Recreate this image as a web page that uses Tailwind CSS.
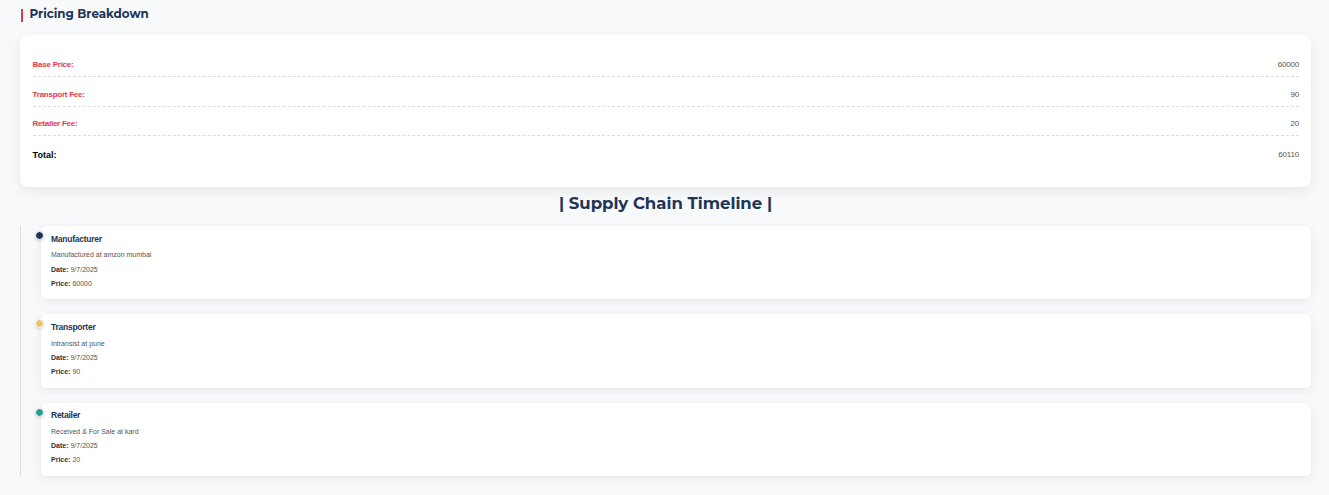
<!DOCTYPE html>
<html lang="en">
<head>
<meta charset="utf-8">
<title>Pricing and Supply Chain</title>
<script src="https://cdn.jsdelivr.net/npm/@tailwindcss/browser@4"></script>
</head>
<body class="h-[495px] overflow-hidden bg-[#f8f9fb] pl-5 pr-[18px] font-['Liberation_Sans',Arial,sans-serif] text-[#555]">
  <h2 class="flex h-[35px] items-start pt-[5px] font-['Montserrat','Inter',sans-serif] text-[11.9px] leading-[18px] font-bold whitespace-nowrap text-[#1d3557]">
    <span class="mt-1 ml-[1px] h-[13px] w-[2px] bg-[#e63946]"></span>
    <span class="ml-[6.5px]">Pricing Breakdown</span>
  </h2>

  <section class="h-[152px] rounded-lg bg-white pr-3 pl-[12.6px] pt-[13px] text-[8px] shadow-[0_4px_12px_rgba(0,0,0,0.08)]">
    <div class="flex h-[29px] items-center justify-between border-b border-dashed border-[#ddd] pt-[5px]">
      <strong class="font-bold tracking-[-0.25px] text-[#e63946]">Base Price:</strong><span class="tracking-[-0.2px]">60000</span>
    </div>
    <div class="flex h-[30px] items-center justify-between border-b border-dashed border-[#ddd] pt-[6px]">
      <strong class="font-bold tracking-[-0.25px] text-[#e63946]">Transport Fee:</strong><span class="tracking-[-0.2px]">90</span>
    </div>
    <div class="flex h-[29px] items-center justify-between border-b border-dashed border-[#ddd] pt-[5px]">
      <strong class="font-bold tracking-[-0.25px] text-[#e63946]">Retailer Fee:</strong><span class="tracking-[-0.2px]">20</span>
    </div>
    <div class="flex h-[32px] items-center justify-between pt-[6px]">
      <strong class="translate-y-px text-[9px] font-bold text-black">Total:</strong><span class="tracking-[-0.2px]">60110</span>
    </div>
  </section>

  <h2 class="h-[39px] pt-[4px] text-center font-['Montserrat','Inter',sans-serif] text-[16.5px] leading-6 font-bold whitespace-nowrap text-[#1d3557]">| Supply Chain Timeline |</h2>

  <section class="flex h-[250px] flex-col justify-between border-l border-[#dcdde0] pl-5 text-[7px] leading-[14px]">
    <article class="relative h-[73px] rounded-md bg-white px-[10px] pt-[6px] shadow-[0_2px_8px_rgba(0,0,0,0.08)]">
      <span class="absolute top-[5px] -left-[6px] size-[9px] rounded-full border border-white bg-[#1d3557] shadow-[0_1px_3px_rgba(0,0,0,0.15)]"></span>
      <h3 class="mb-[2px] text-[8.5px] font-bold tracking-[-0.25px] text-[#1d3557]">Manufacturer</h3>
      <p class="mb-px">Manufactured at amzon mumbai</p>
      <p><strong class="text-[#333]">Date:</strong> 9/7/2025</p>
      <p><strong class="text-[#333]">Price:</strong> 60000</p>
    </article>
    <article class="relative h-[74px] rounded-md bg-white px-[10px] pt-[6px] shadow-[0_2px_8px_rgba(0,0,0,0.08)]">
      <span class="absolute top-[5px] -left-[6px] size-[9px] rounded-full border border-white bg-[#e9c46a] shadow-[0_1px_3px_rgba(0,0,0,0.15)]"></span>
      <h3 class="mb-[3px] text-[8.5px] font-bold tracking-[-0.25px] text-[#1d3557]">Transporter</h3>
      <p>Intransist at pune</p>
      <p><strong class="text-[#333]">Date:</strong> 9/7/2025</p>
      <p><strong class="text-[#333]">Price:</strong> 90</p>
    </article>
    <article class="relative h-[73px] rounded-md bg-white px-[10px] pt-[5px] shadow-[0_2px_8px_rgba(0,0,0,0.08)]">
      <span class="absolute top-[5px] -left-[6px] size-[9px] rounded-full border border-white bg-[#2a9d8f] shadow-[0_1px_3px_rgba(0,0,0,0.15)]"></span>
      <h3 class="mb-[3px] text-[8.5px] font-bold tracking-[-0.25px] text-[#1d3557]">Retailer</h3>
      <p>Received &amp; For Sale at kard</p>
      <p><strong class="text-[#333]">Date:</strong> 9/7/2025</p>
      <p><strong class="text-[#333]">Price:</strong> 20</p>
    </article>
  </section>
</body>
</html>
